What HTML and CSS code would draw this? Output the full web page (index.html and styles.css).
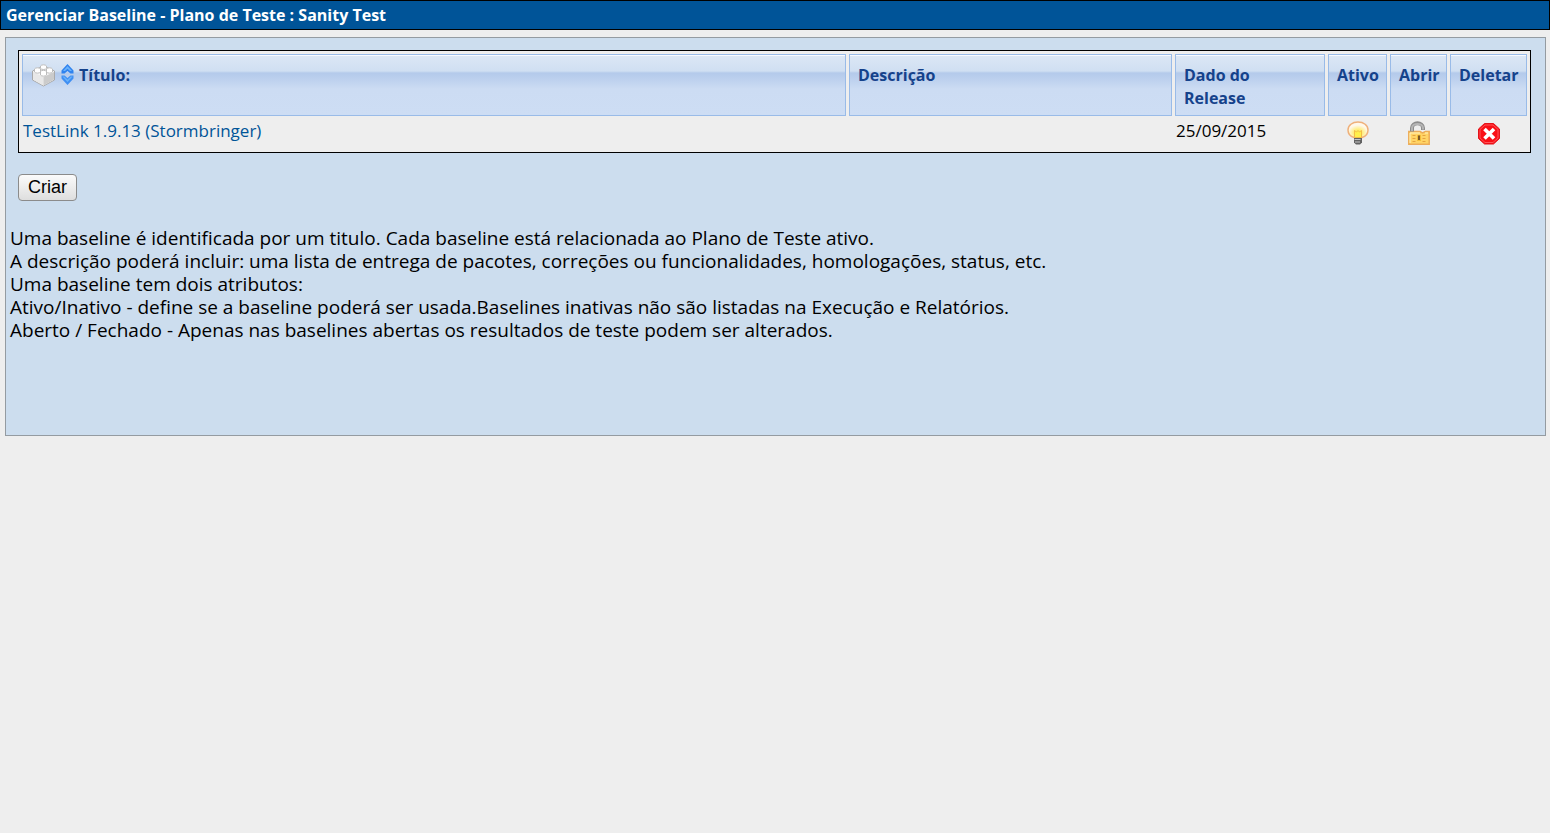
FILE: index.html
```html
<!DOCTYPE html>
<html lang="pt-BR">
<head>
<meta charset="utf-8">
<title>Gerenciar Baseline</title>
<link rel="stylesheet" href="styles.css">
</head>
<body>
<h1 class="title">Gerenciar Baseline - Plano de Teste : Sanity Test</h1>
<main class="work-back">
  <table class="builds">
    <colgroup><col class="col-title"><col class="col-notes"><col class="col-date"><col class="col-active"><col class="col-open"><col class="col-delete"></colgroup>
    <thead>
      <tr>
        <th scope="col">
          <div class="heading">
            <svg class="brick" viewBox="0 0 25 23" aria-hidden="true">
              <path d="M1.500 7 12.500 2 23.500 7v9l-11 6-11-6z" fill="#f6f6f6" stroke="#aaa" stroke-linejoin="round"/>
              <path d="M2 8l10.500 5v8.500L2 15.500z" fill="#e8e8e8"/>
              <path d="M12.500 13 23 8v7.500l-10.500 6z" fill="#cbcbcb"/>
              <g fill="#fff" stroke="#bcbcbc">
                <path d="M9.500 2v2.500c1 1.300 5 1.300 6 0V2c-1-1.600-5-1.600-6 0z"/>
                <path d="M3.500 5v3c1 1.500 5 1.500 6 0V5c-1-1.600-5-1.600-6 0z"/>
                <path d="M15.500 5v3c1 1.500 5 1.500 6 0V5c-1-1.600-5-1.600-6 0z"/>
                <path d="M9.500 7.500v3.500c1 1.500 5 1.500 6 0V7.500c-1-1.600-5-1.600-6 0z"/>
              </g>
            </svg>
            <svg class="sort" viewBox="0 0 13 21" aria-hidden="true">
              <path d="M6.500 0 12.500 6.500v3h-3l-3-2.500-3 2.500h-3v-3z" fill="#2f83ef"/>
              <path d="M6.500 2 11 7H9L6.500 4.700 4 7H2z" fill="#69b2fb"/>
              <path d="M6.500 21 .5 14.500v-3h3l3 2.500 3-2.500h3v3z" fill="#3f8ff3"/>
              <path d="M1.500 12.500h1.700l3.300 3.300 3.300-3.300h1.700L6.500 18z" fill="#69b2fb"/>
            </svg>
            <span>Título:</span>
          </div>
        </th>
        <th scope="col">Descrição</th>
        <th scope="col" class="date-head">Dado do Release</th>
        <th scope="col">Ativo</th>
        <th scope="col">Abrir</th>
        <th scope="col">Deletar</th>
      </tr>
    </thead>
    <tbody>
      <tr>
        <td><a href="#">TestLink 1.9.13 (Stormbringer)</a></td>
        <td></td>
        <td>25/09/2015</td>
        <td class="action">
          <button class="icon-button" type="button" aria-label="Ativo">
            <svg viewBox="0 0 22 24" aria-hidden="true">
              <defs><radialGradient id="glow" cy=".7"><stop stop-color="#ffe92e"/><stop offset=".45" stop-color="#ffee80"/><stop offset="1" stop-color="#fff8ea"/></radialGradient></defs>
              <path d="M7 16.500C3.500 15.500 1 12.500 1 9 1 4.300 5.300 1 11 1s10 3.300 10 8c0 3.500-2.500 6.500-6 7.500z" fill="url(#glow)" stroke="#efb07a" stroke-width="1.500"/>
              <path d="M7.500 16.500V9.500l2 1.500 1.500-1.500 1.500 1.500 2-1.500v7z" fill="#fff04a" stroke="#f3bd48"/>
              <path d="M7 17h8v4.500L13 23.500H9l-2-2z" fill="#626262"/>
              <path d="M7.500 18.500h6M8 21h5" stroke="#c4c4c4"/>
            </svg>
          </button>
        </td>
        <td class="action">
          <button class="icon-button" type="button" aria-label="Abrir">
            <svg viewBox="0 0 22 24" aria-hidden="true">
              <path d="M.8 10.500H12l2.500 1.500 3-1.500h3.700v12.700H.8z" fill="#ffd466" stroke="#ecac58" stroke-width="1.500"/>
              <path d="M2 12h10M2 12v10M17 12h3" stroke="#fff2bd"/>
              <path d="M4.500 14.500h3m-3 3h3m-3 3h3m7-6h3m-3 3h3m-3 3h3" stroke="#e6a340"/>
              <path d="M9 14h4v6H9z" fill="#f4bd38"/>
              <path d="M11 14.500V19" stroke="#7b5928" stroke-width="2"/>
              <path d="M4 10.500V7C4 .8 15 .8 15 7v2" fill="none" stroke="#8c8c8c" stroke-width="4"/>
              <path d="M4 10V7C4 1.500 15 1.500 15 7v1.500" fill="none" stroke="#b5b5b5" stroke-width="2"/>
            </svg>
          </button>
        </td>
        <td class="action">
          <button class="icon-button" type="button" aria-label="Deletar">
            <svg viewBox="0 0 22 24" aria-hidden="true">
              <path d="M6.500 2.500h9L21.500 8v9.500l-6 5.500h-9l-6-5.500V8z" fill="#f90f16" stroke="#e2141a"/>
              <path d="M7 4h8l5 4.500v8.500l-5 4.500H7L2 17V8.500z" fill="none" stroke="#ff5357"/>
              <path d="m6.500 8 9.500 9.500m0-9.500-9.500 9.500" stroke="#fff" stroke-width="3.600"/>
            </svg>
          </button>
        </td>
      </tr>
    </tbody>
  </table>
  <button class="create" type="button">Criar</button>
  <p class="help">Uma baseline é identificada por um titulo. Cada baseline está relacionada ao Plano de Teste ativo.<br>
  A descrição poderá incluir: uma lista de entrega de pacotes, correções ou funcionalidades, homologações, status, etc.<br>
  Uma baseline tem dois atributos:<br>
  Ativo/Inativo - define se a baseline poderá ser usada.Baselines inativas não são listadas na Execução e Relatórios.<br>
  Aberto / Fechado - Apenas nas baselines abertas os resultados de teste podem ser alterados.</p>
</main>
</body>
</html>
```
FILE: styles.css
```css
* { box-sizing: border-box; }

body {
  margin: 0;
  background: #eee;
  color: #000;
  font-family: "Trebuchet MS", "Open Sans", "Noto Sans", sans-serif;
  font-size: 17px;
}

.title {
  margin: 0;
  padding: 1px 5px;
  border: 1px solid #000;
  background: #005498;
  color: #fff;
  font-size: 16px;
  line-height: 26px;
}

.work-back {
  margin: 7px 4px 0 5px;
  padding: 12px 14px 93px 12px;
  border: 1px solid #949ba1;
  background: #cde;
}

.builds {
  width: 100%;
  table-layout: fixed;
  border: 1px solid #000;
  border-collapse: separate;
  border-spacing: 3px;
  background: #eee;
}

.col-notes { width: 323px; }
.col-date { width: 150px; }
.col-active { width: 59px; }
.col-open { width: 57px; }
.col-delete { width: 77px; }

.builds th {
  height: 62px;
  padding: 9px 0 5px 8px;
  border: 1px solid #99bbe8;
  box-shadow: inset 0 1px #f8faff;
  background: linear-gradient(#dce7f5 0, #d0dff2 16px, #b4caeb 18px, #bcd0ee 24px, #ccdcf3 34px, #cdddf4 100%);
  color: #15428b;
  font-size: 16px;
  line-height: 23px;
  text-align: left;
  vertical-align: top;
}

.builds .date-head { padding-right: 24px; }

.heading {
  display: flex;
  align-items: flex-start;
  gap: 5px;
}

.brick { width: 25px; height: 23px; }
.sort { width: 13px; height: 21px; }

.builds td {
  height: 30px;
  padding: 0 1px;
  font-size: 17px;
  line-height: 23px;
  vertical-align: top;
}

.builds a {
  color: #005498;
  text-decoration: none;
}

.builds .action { padding: 2px 0; }

.icon-button {
  display: block;
  margin: 0 auto;
  padding: 0;
  border: 0;
  background: none;
  cursor: pointer;
}

.icon-button svg {
  display: block;
  width: 22px;
  height: 24px;
}

.create {
  display: block;
  margin-top: 21px;
  padding: 0 9px;
  border: 1px solid #8b8b8b;
  border-radius: 4px;
  background: linear-gradient(#fbfbfb, #dedede);
  color: #000;
  font-family: "Liberation Sans", Arial, sans-serif;
  font-size: 18px;
  line-height: 25px;
}

.help {
  margin: 26px -8px 0;
  font-size: 19px;
  line-height: 23px;
}
```
